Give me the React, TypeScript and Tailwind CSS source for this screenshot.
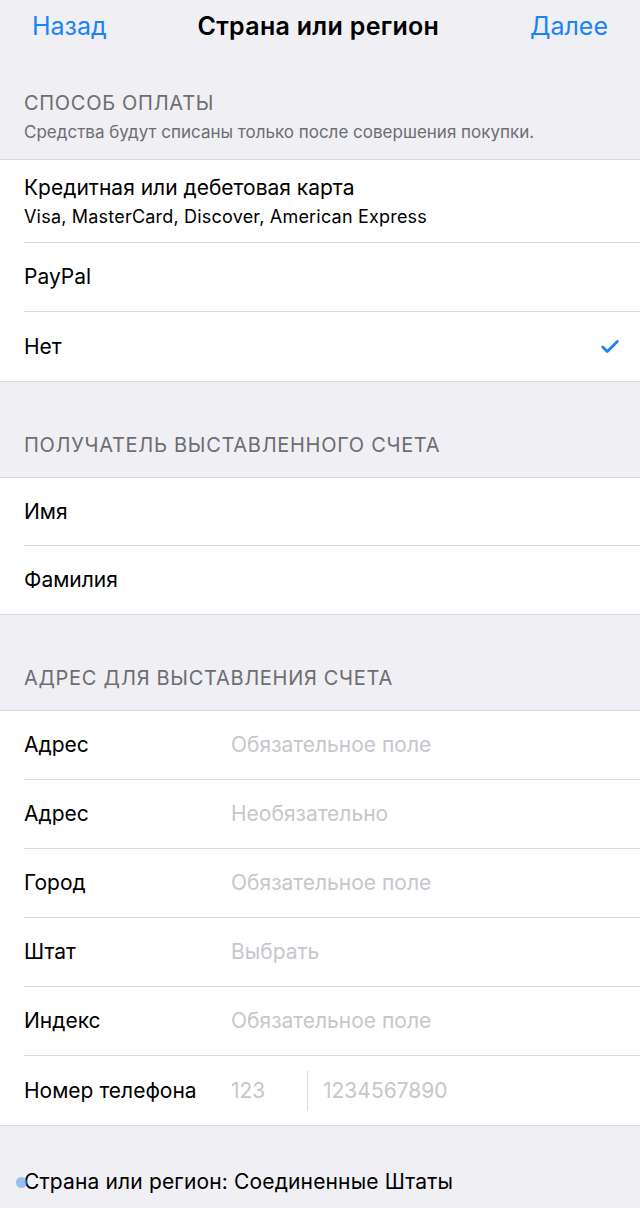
import { Check } from 'lucide-react';

const font = { fontFamily: 'Inter, "Noto Sans", sans-serif' };

function SectionHeader({ title, note, className }: { title: string; note?: string; className: string }) {
  return (
    <div className={`flex flex-col justify-end px-6 ${className}`}>
      <div className="text-[20px] leading-6 tracking-[0.7px] text-[#6d6d72]">{title}</div>
      {note && <div className="mt-[7px] text-[17px] leading-5 text-[#6d6d72]">{note}</div>}
    </div>
  );
}

function Row({ children, last, h = 'h-[69px]' }: { children: React.ReactNode; last?: boolean; h?: string }) {
  return (
    <div className="pl-6">
      <div className={`flex items-center pr-6 ${h} ${last ? '' : 'border-b border-[#d9d9de]'}`}>{children}</div>
    </div>
  );
}

function Field({ label, placeholder, last }: { label: string; placeholder: string; last?: boolean }) {
  return (
    <Row last={last}>
      <span className="w-[207px] text-[21px] text-black">{label}</span>
      <span className="text-[21px] text-[#c7c7cc]">{placeholder}</span>
    </Row>
  );
}

export default function App() {
  return (
    <div className="relative min-h-[1208px] w-[640px] overflow-hidden bg-[#efeff4]" style={font}>
      {/* navigation bar */}
      <div className="flex h-[56px] items-center justify-between px-8 pb-[2px]">
        <span className="text-[25px] text-[#1a82fb]">Назад</span>
        <span className="text-[25px] font-semibold tracking-[0.3px] text-black">Страна или регион</span>
        <span className="text-[25px] text-[#1a82fb]">Далее</span>
      </div>

      <SectionHeader
        className="h-[103px] pb-[17px]"
        title="СПОСОБ ОПЛАТЫ"
        note="Средства будут списаны только после совершения покупки."
      />
      <div className="border-y border-[#d9d9de] bg-white">
        <Row h="h-[83px]">
          <div className="flex flex-col">
            <span className="text-[21px] leading-7 text-black">Кредитная или дебетовая карта</span>
            <span className="mt-[3px] text-[18px] leading-6 tracking-[0.2px] text-black">
              Visa, MasterCard, Discover, American Express
            </span>
          </div>
        </Row>
        <Row>
          <span className="text-[21px] text-black">PayPal</span>
        </Row>
        <Row last>
          <span className="flex-1 text-[21px] text-black">Нет</span>
          <Check className="mr-[-5px] h-[22px] w-[22px] text-[#1a82fb]" strokeWidth={3} />
        </Row>
      </div>

      <SectionHeader className="h-[95px] pb-[20px]" title="ПОЛУЧАТЕЛЬ ВЫСТАВЛЕННОГО СЧЕТА" />
      <div className="border-y border-[#d9d9de] bg-white">
        <Row h="h-[68px]">
          <span className="text-[21px] text-black">Имя</span>
        </Row>
        <Row h="h-[68px]" last>
          <span className="text-[21px] text-black">Фамилия</span>
        </Row>
      </div>

      <SectionHeader className="h-[95px] pb-[20px]" title="АДРЕС ДЛЯ ВЫСТАВЛЕНИЯ СЧЕТА" />
      <div className="border-y border-[#d9d9de] bg-white">
        <Field label="Адрес" placeholder="Обязательное поле" />
        <Field label="Адрес" placeholder="Необязательно" />
        <Field label="Город" placeholder="Обязательное поле" />
        <Field label="Штат" placeholder="Выбрать" />
        <Field label="Индекс" placeholder="Обязательное поле" />
        <Row last>
          <span className="w-[207px] text-[21px] text-black">Номер телефона</span>
          <span className="w-[76px] text-[21px] text-[#c7c7cc]">123</span>
          <span className="h-[40px] w-px bg-[#d9d9de]" />
          <span className="ml-[15px] text-[21px] text-[#c7c7cc]">1234567890</span>
        </Row>
      </div>

      <div className="flex h-[81px] items-end px-6 pb-[10px]">
        <span className="text-[21px] tracking-[0.15px] text-black">Страна или регион: Соединенные Штаты</span>
      </div>
      <span className="absolute left-[16px] top-[1177px] h-[11px] w-[11px] rounded-full bg-[#5aa0f0]/60" />
    </div>
  );
}
